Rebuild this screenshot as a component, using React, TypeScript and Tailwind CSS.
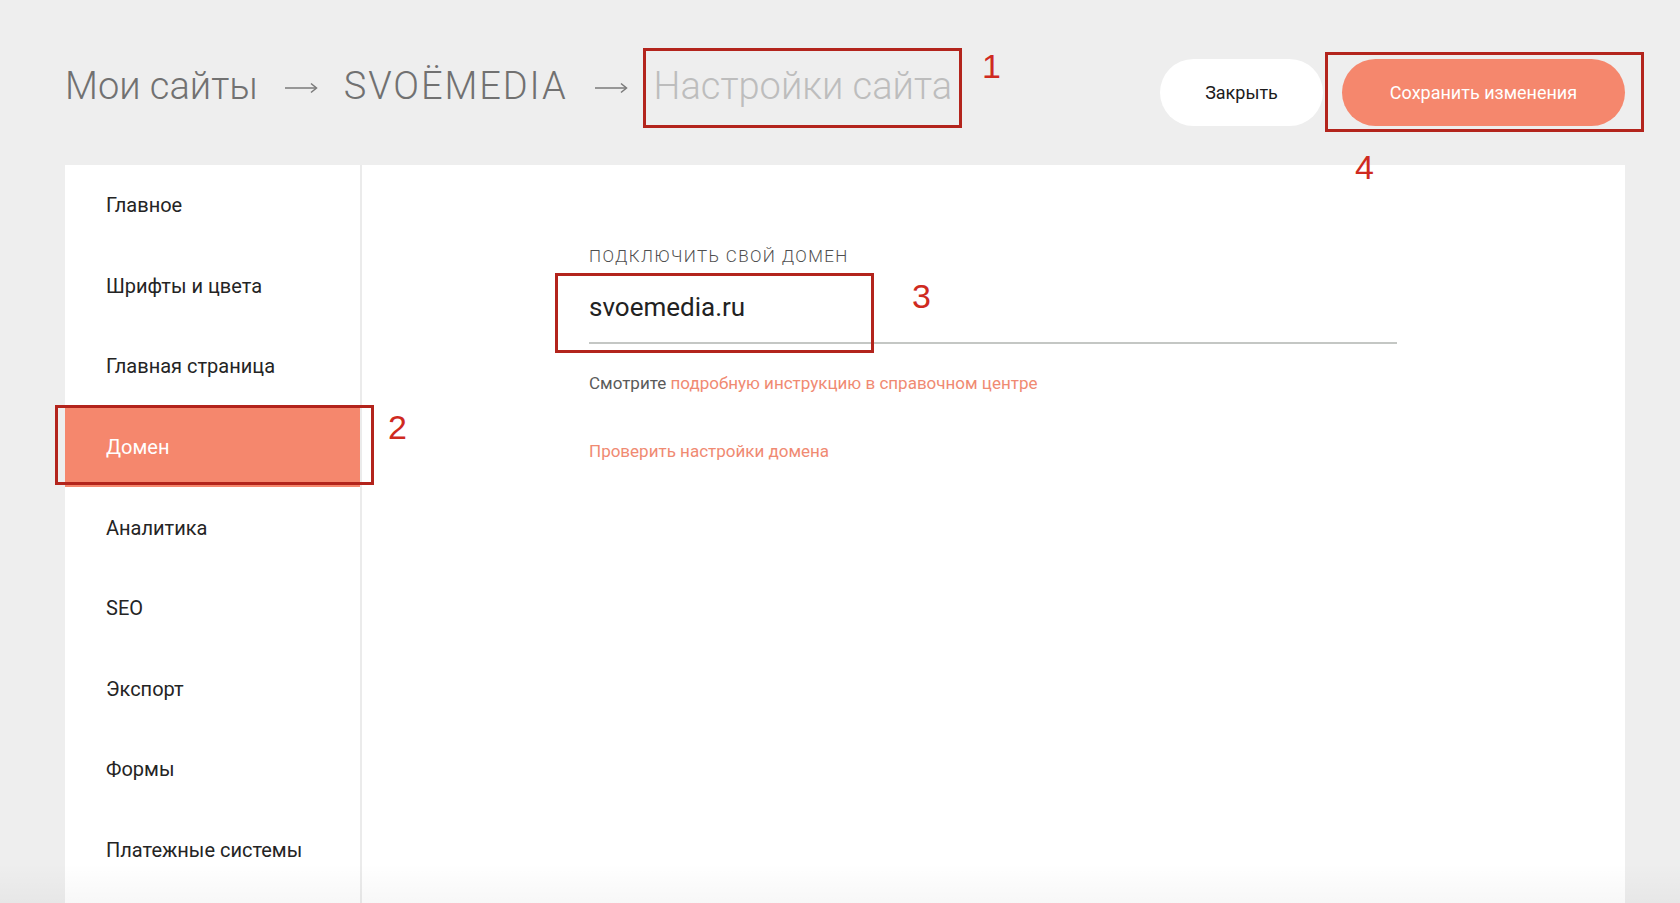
import React from "react";

const MENU = [
  "Главное",
  "Шрифты и цвета",
  "Главная страница",
  "Домен",
  "Аналитика",
  "SEO",
  "Экспорт",
  "Формы",
  "Платежные системы",
];

const ACTIVE = "Домен";

/** Thin long breadcrumb arrow. */
function Arrow() {
  return (
    <svg
      viewBox="0 0 34 12"
      className="mx-[26px] mt-[4px] h-[12px] w-[34px]"
      aria-hidden="true"
    >
      <path d="M1 6h31" stroke="#7a7a7a" strokeWidth="1.5" fill="none" />
      <path d="M27 1.5L32.5 6L27 10.5" stroke="#7a7a7a" strokeWidth="1.5" fill="none" />
    </svg>
  );
}

/** Red annotation frame drawn over the screenshot, with its number. */
function Mark({
  box,
  num,
  numPos,
}: {
  box: string;
  num: string;
  numPos: string;
}) {
  return (
    <>
      <div className={`pointer-events-none absolute border-[3px] border-[#b3241c] ${box}`} />
      <span
        className={`pointer-events-none absolute text-[34px] leading-none text-[#cf2a1f] ${numPos}`}
        style={{ fontFamily: '"Liberation Sans", Arial, sans-serif' }}
      >
        {num}
      </span>
    </>
  );
}

function Header() {
  return (
    <header className="flex h-[165px] shrink-0 items-start justify-between pl-[65px] pr-[55px] pt-[59px]">
      <nav className="flex h-[54px] items-center text-[38px] font-light text-[#717171]">
        <span>Мои сайты</span>
        <Arrow />
        <span className="tracking-[0.05em]">SVOËMEDIA</span>
        <Arrow />
        <span className="text-[#bdbdbd]">Настройки сайта</span>
      </nav>
      <div className="flex items-center gap-[19px]">
        <button
          type="button"
          className="h-[67px] w-[163px] rounded-full bg-white text-[18px] text-[#1c1c1c]"
        >
          Закрыть
        </button>
        <button
          type="button"
          className="h-[67px] w-[283px] rounded-full bg-[#f5876d] text-[18px] text-white"
        >
          Сохранить изменения
        </button>
      </div>
    </header>
  );
}

function Sidebar() {
  return (
    <aside className="w-[297px] shrink-0 border-r-2 border-[#ebebeb]">
      {MENU.map((item) => (
        <div
          key={item}
          className={
            item === ACTIVE
              ? "flex h-[80.6px] items-center bg-[#f5876d] pl-[41px] text-[20px] text-white"
              : "flex h-[80.6px] items-center pl-[41px] text-[20px] text-[#242424]"
          }
        >
          {item}
        </div>
      ))}
    </aside>
  );
}

function DomainSettings() {
  return (
    <section className="flex-1 pl-[227px] pt-[81px]">
      <div className="text-[17px] font-light uppercase leading-[20px] tracking-[0.08em] text-[#4f4f4f]">
        Подключить свой домен
      </div>
      <div className="mt-[24px] w-[808px] border-b-2 border-[#c4c7c4] pb-[18px]">
        <div className="text-[26px] leading-[34px] text-[#222]">svoemedia.ru</div>
      </div>
      <p className="mt-[29px] text-[17px] leading-[20px] text-[#5a5a5a]">
        Смотрите{" "}
        <span className="text-[#f08a72]">подробную инструкцию в справочном центре</span>
      </p>
      <p className="mt-[48px] text-[17px] leading-[20px] text-[#f08a72]">
        Проверить настройки домена
      </p>
    </section>
  );
}

export default function App() {
  return (
    <div
      className="relative flex h-[903px] w-[1680px] flex-col overflow-hidden bg-[#eeeeee]"
      style={{ fontFamily: 'Roboto, "Noto Sans", sans-serif' }}
    >
      <Header />
      <main className="ml-[65px] mr-[55px] flex flex-1 bg-white">
        <Sidebar />
        <DomainSettings />
      </main>

      {/* faint shading along the bottom of the capture */}
      <div className="pointer-events-none absolute inset-x-0 bottom-0 h-[40px] bg-gradient-to-b from-transparent to-black/[0.03]" />

      <Mark box="left-[643px] top-[48px] h-[80px] w-[319px]" num="1" numPos="left-[982px] top-[49px]" />
      <Mark box="left-[55px] top-[405px] h-[80px] w-[319px]" num="2" numPos="left-[388px] top-[410px]" />
      <Mark box="left-[555px] top-[273px] h-[80px] w-[319px]" num="3" numPos="left-[912px] top-[279px]" />
      <Mark box="left-[1325px] top-[52px] h-[80px] w-[319px]" num="4" numPos="left-[1355px] top-[150px]" />
    </div>
  );
}
